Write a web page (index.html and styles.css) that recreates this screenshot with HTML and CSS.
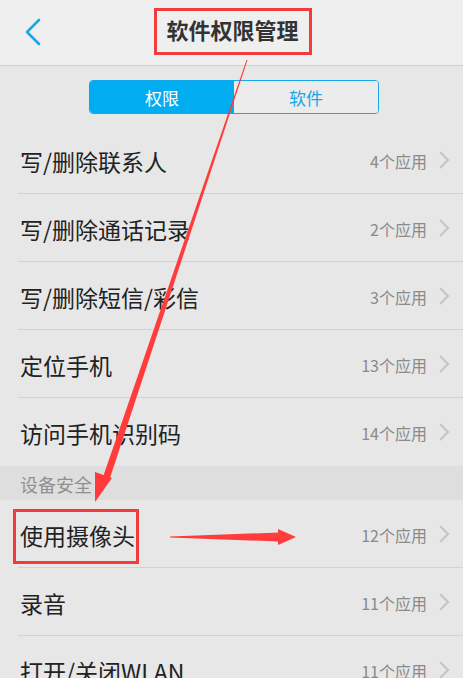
FILE: index.html
```html
<!DOCTYPE html>
<html lang="zh-CN">
<head>
<meta charset="utf-8">
<title>软件权限管理</title>
<link rel="stylesheet" href="styles.css">
</head>
<body>
<div class="page">
  <header class="header">
    <div class="back">
      <svg width="20" height="30" viewBox="0 0 20 30"><polyline points="15,2 3,14 15,26" fill="none" stroke="#1aa7e6" stroke-width="2.6" stroke-linecap="round" stroke-linejoin="round"/></svg>
    </div>
    <h1 class="title">软件权限管理</h1>
    <div></div>
  </header>
  <div class="seg-wrap">
    <div class="seg">
      <div class="seg-item active">权限</div>
      <div class="seg-item">软件</div>
    </div>
  </div>
  <ul class="list">
    <li class="row"><span class="name">写/删除联系人</span><span class="count">4个应用</span><span class="chev"><svg width="12" height="20" viewBox="0 0 12 20"><polyline points="2,2 10,10 2,18" fill="none" stroke="#c4c4c4" stroke-width="2"/></svg></span></li>
    <li class="row"><span class="name">写/删除通话记录</span><span class="count">2个应用</span><span class="chev"><svg width="12" height="20" viewBox="0 0 12 20"><polyline points="2,2 10,10 2,18" fill="none" stroke="#c4c4c4" stroke-width="2"/></svg></span></li>
    <li class="row"><span class="name">写/删除短信/彩信</span><span class="count">3个应用</span><span class="chev"><svg width="12" height="20" viewBox="0 0 12 20"><polyline points="2,2 10,10 2,18" fill="none" stroke="#c4c4c4" stroke-width="2"/></svg></span></li>
    <li class="row"><span class="name">定位手机</span><span class="count">13个应用</span><span class="chev"><svg width="12" height="20" viewBox="0 0 12 20"><polyline points="2,2 10,10 2,18" fill="none" stroke="#c4c4c4" stroke-width="2"/></svg></span></li>
    <li class="row last"><span class="name">访问手机识别码</span><span class="count">14个应用</span><span class="chev"><svg width="12" height="20" viewBox="0 0 12 20"><polyline points="2,2 10,10 2,18" fill="none" stroke="#c4c4c4" stroke-width="2"/></svg></span></li>
  </ul>
  <div class="section">设备安全</div>
  <ul class="list">
    <li class="row"><span class="name">使用摄像头</span><span class="count">12个应用</span><span class="chev"><svg width="12" height="20" viewBox="0 0 12 20"><polyline points="2,2 10,10 2,18" fill="none" stroke="#c4c4c4" stroke-width="2"/></svg></span></li>
    <li class="row"><span class="name">录音</span><span class="count">11个应用</span><span class="chev"><svg width="12" height="20" viewBox="0 0 12 20"><polyline points="2,2 10,10 2,18" fill="none" stroke="#c4c4c4" stroke-width="2"/></svg></span></li>
    <li class="row"><span class="name">打开/关闭WLAN</span><span class="count">11个应用</span><span class="chev"><svg width="12" height="20" viewBox="0 0 12 20"><polyline points="2,2 10,10 2,18" fill="none" stroke="#c4c4c4" stroke-width="2"/></svg></span></li>
  </ul>

  <svg class="annot" width="463" height="678" viewBox="0 0 463 678">
    <rect x="155.5" y="9.5" width="155" height="44" fill="none" stroke="#f23b3b" stroke-width="3"/>
    <rect x="14.5" y="510.5" width="123" height="52" fill="none" stroke="#f23b3b" stroke-width="3"/>
    <polygon points="247.5,60 246.5,60 103,477 109.5,479.5" fill="#ff3b3b"/>
    <polygon points="95,472 112,478 95,502" fill="#ff3b3b"/>
    <polygon points="170,536.5 170,537.5 279,541.5 279,532.5" fill="#ff3b3b"/>
    <polygon points="278,529 296,537 278,545" fill="#ff3b3b"/>
  </svg>
</div>
</body>
</html>
```

FILE: styles.css
```css
* { box-sizing: border-box; }
html, body { margin: 0; padding: 0; }
body {
  width: 463px;
  height: 678px;
  overflow: hidden;
  background: #e7e7e7;
  font-family: "Noto Sans CJK SC", "Noto Sans", sans-serif;
}
.page { position: relative; width: 463px; height: 678px; }

.header {
  height: 66px;
  background: #efefef;
  border-bottom: 1px solid #cfcfcf;
  display: grid;
  grid-template-columns: 1fr auto 1fr;
  align-items: center;
}
.back { padding-left: 24px; display: flex; align-items: center; padding-top: 1px; }
.title {
  margin: 0;
  font-size: 22px;
  font-weight: 700;
  color: #333;
  line-height: 1;
  margin-top: -7px;
  padding-left: 2px;
}

.seg-wrap {
  height: 60px;
  display: flex;
  justify-content: center;
  align-items: center;
  padding-top: 2px;
  padding-left: 5px;
}
.seg {
  width: 290px;
  height: 34px;
  display: flex;
  border: 1px solid #13a8ec;
  border-radius: 4px;
  overflow: hidden;
}
.seg-item {
  flex: 1;
  display: flex;
  align-items: center;
  justify-content: center;
  font-size: 17px;
  color: #17a6e6;
  background: #ececec;
}
.seg-item.active { background: #00adf0; color: #fff; }

.list { list-style: none; margin: 0; padding: 0; }
.row {
  height: 68px;
  margin-left: 18px;
  padding-left: 2px;
  padding-right: 13px;
  display: flex;
  align-items: center;
  border-bottom: 1px solid #d2d2d2;
}
.row.last { border-bottom: none; }
.name {
  flex: 1;
  font-size: 23px;
  color: #222;
  line-height: 1;
  padding-top: 3px;
}
.count {
  font-size: 16px;
  color: #8a8a8a;
  padding-top: 2px;
}
.chev { width: 12px; margin-left: 11px; display: flex; align-items: center; }

.section {
  height: 34px;
  background: #dedede;
  padding-left: 20px;
  font-size: 18px;
  color: #909090;
  display: flex;
  align-items: center;
  padding-top: 2px;
}

.annot { position: absolute; left: 0; top: 0; pointer-events: none; }
```
